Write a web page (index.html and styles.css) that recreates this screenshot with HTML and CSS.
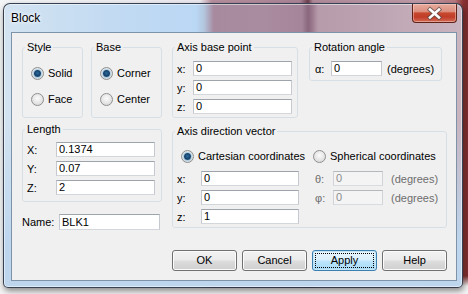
FILE: index.html
```html
<!DOCTYPE html>
<html>
<head>
<meta charset="utf-8">
<link rel="stylesheet" href="styles.css">
</head>
<body>
<div class="win">
  <div class="titlebar">
    <span class="title">Block</span>
    <div class="close">
      <svg width="43" height="17" viewBox="0 0 43 17">
        <path d="M17 4.5 L26 12.5 M26 4.5 L17 12.5" stroke="#5a4a48" stroke-width="4.4" stroke-linecap="square" fill="none" opacity="0.75"/>
        <path d="M17 4.5 L26 12.5 M26 4.5 L17 12.5" stroke="#ffffff" stroke-width="2.6" stroke-linecap="square" fill="none"/>
      </svg>
    </div>
  </div>
  <div class="client">
    <div class="col col-left">
      <div class="top-row">
        <fieldset class="grp grp-style">
          <legend>Style</legend>
          <div class="radios">
            <div class="radio"><span class="rb"><span class="dot"></span></span>Solid</div>
            <div class="radio"><span class="rb"></span>Face</div>
          </div>
        </fieldset>
        <fieldset class="grp grp-base">
          <legend>Base</legend>
          <div class="radios">
            <div class="radio"><span class="rb"><span class="dot"></span></span>Corner</div>
            <div class="radio"><span class="rb"></span>Center</div>
          </div>
        </fieldset>
      </div>
      <fieldset class="grp grp-length">
        <legend>Length</legend>
        <div class="fields">
          <div class="field"><span class="lbl">X:</span><span class="tb">0.1374</span></div>
          <div class="field"><span class="lbl">Y:</span><span class="tb">0.07</span></div>
          <div class="field"><span class="lbl">Z:</span><span class="tb">2</span></div>
        </div>
      </fieldset>
      <div class="name-row"><span class="lbl">Name:</span><span class="tb tb-name">BLK1</span></div>
    </div>
    <div class="col col-right">
      <div class="top-row top-row-right">
        <fieldset class="grp grp-abp">
          <legend>Axis base point</legend>
          <div class="fields">
            <div class="field"><span class="lbl">x:</span><span class="tb">0</span></div>
            <div class="field"><span class="lbl">y:</span><span class="tb">0</span></div>
            <div class="field"><span class="lbl">z:</span><span class="tb">0</span></div>
          </div>
        </fieldset>
        <fieldset class="grp grp-rot">
          <legend>Rotation angle</legend>
          <div class="fields">
            <div class="field"><span class="lbl">α:</span><span class="tb">0</span><span class="unit">(degrees)</span></div>
          </div>
        </fieldset>
      </div>
      <fieldset class="grp grp-adv">
        <legend>Axis direction vector</legend>
        <div class="adv-body">
          <div class="radio-row">
            <div class="radio radio-cart"><span class="rb"><span class="dot"></span></span>Cartesian coordinates</div>
            <div class="radio"><span class="rb"></span>Spherical coordinates</div>
          </div>
          <div class="adv-rows">
            <div class="field"><span class="lbl">x:</span><span class="tb">0</span><span class="lbl lbl-dis">θ:</span><span class="tb tb-dis">0</span><span class="unit unit-dis">(degrees)</span></div>
            <div class="field"><span class="lbl">y:</span><span class="tb">0</span><span class="lbl lbl-dis">φ:</span><span class="tb tb-dis">0</span><span class="unit unit-dis">(degrees)</span></div>
            <div class="field"><span class="lbl">z:</span><span class="tb">1</span></div>
          </div>
        </div>
      </fieldset>
      <div class="buttons">
        <div class="btn">OK</div>
        <div class="btn">Cancel</div>
        <div class="btn btn-default">Apply</div>
        <div class="btn">Help</div>
      </div>
    </div>
  </div>
</div>
</body>
</html>
```
FILE: styles.css
```css
html, body {
  margin: 0;
  padding: 0;
}
body {
  width: 468px;
  height: 294px;
  overflow: hidden;
  font-family: "Liberation Sans", Arial, sans-serif;
  font-size: 11px;
  color: #000;
  background:
    linear-gradient(to bottom, rgba(246,246,246,0) 0, rgba(246,246,246,0) 276px, #f4f4f4 286px),
    linear-gradient(to right, #f4f5f7 0, #eceaf0 200px, #b7909f 212px, #ab8598 300px, #6f4050 308px, #b28c9c 313px, #c09ca9 420px, #b87a80 455px, #8c3434 463px, #7e2c2c 468px);
}
.win {
  margin: 3px 0 0 3px;
  width: 460px;
  height: 285px;
  box-sizing: border-box;
  border: 1px solid rgba(30, 40, 55, 0.85);
  border-radius: 7px 7px 5px 5px;
  display: flex;
  flex-direction: column;
  overflow: hidden;
  background:
    linear-gradient(to bottom, rgba(189,214,238,0) 0, rgba(189,214,238,0) 40%, #bdd6ee 85%),
    linear-gradient(to right, #d3e3f1 0, #c3dbf2 100px, #bad7f4 192px, #b3c6de 200px, #a78a9e 210px, #aa8ca0 260px, #a48599 298px, #8a677c 304px, #9a788c 308px, #b69bab 314px, #bfa6b4 380px, #c9b4bf 458px);
  box-shadow: 1px 3px 6px rgba(0, 0, 0, 0.45), inset 0 0 0 1px rgba(255, 255, 255, 0.5);
}
.titlebar {
  flex: none;
  height: 28px;
  display: flex;
  align-items: flex-start;
  padding-left: 7px;
}
.title {
  margin-top: 7px;
  font-size: 12px;
  line-height: 14px;
  text-shadow: 0 0 5px #fff, 0 0 3px rgba(255,255,255,0.9);
}
.close {
  margin-left: auto;
  margin-right: 5px;
  width: 45px;
  height: 19px;
  box-sizing: border-box;
  border: 1px solid #5e2219;
  border-top: none;
  border-radius: 0 0 4px 4px;
  background: linear-gradient(to bottom, #e7ab9d 0, #dc8f7f 42%, #c8492f 50%, #c03c27 72%, #d56c57 100%);
  box-shadow: inset 0 0 0 1px rgba(255, 220, 210, 0.45);
  display: flex;
  align-items: center;
  justify-content: center;
}
.close svg {
  display: block;
}
.client {
  flex: none;
  height: 249px;
  margin: 0 5px 0 7px;
  box-sizing: border-box;
  border: 1px solid #7f93a8;
  background: #f0f0f0;
  display: flex;
  gap: 10px;
  padding: 7px 0 0 10px;
}
.col {
  display: flex;
  flex-direction: column;
}
.col-left {
  width: 140px;
}
.col-right {
  width: 275px;
}
.top-row {
  display: flex;
  gap: 8px;
  height: 78px;
}
.top-row-right {
  gap: 11px;
  align-items: flex-start;
}
.grp {
  margin: 0;
  padding: 0;
  min-width: 0;
  box-sizing: border-box;
  border: 1px solid #d5dfe5;
  border-radius: 3px;
}
.grp legend {
  margin-left: 2px;
  padding: 0 2px;
  line-height: 14px;
  height: 14px;
  white-space: nowrap;
}
.grp-style {
  width: 61px;
  height: 78px;
}
.grp-base {
  width: 71px;
  height: 78px;
}
.radios {
  padding: 11px 0 0 8px;
  display: flex;
  flex-direction: column;
  gap: 10px;
}
.radio {
  display: flex;
  align-items: center;
  height: 16px;
  gap: 4px;
  white-space: nowrap;
}
.rb {
  flex: none;
  width: 13px;
  height: 13px;
  box-sizing: border-box;
  border-radius: 50%;
  border: 1px solid #8e8f8f;
  background: radial-gradient(circle at 50% 40%, #fbfbfb 0, #e9e9e9 45%, #d2d2d2 100%);
  display: flex;
  align-items: center;
  justify-content: center;
}
.dot {
  width: 7px;
  height: 7px;
  border-radius: 50%;
  background: radial-gradient(circle at 50% 45%, #2a6ea3 0, #163f66 55%, #2e7cb8 100%);
  box-shadow: 0 0 1px 1px rgba(110, 180, 225, 0.55);
}
.grp-length {
  margin-top: 4px;
  height: 80px;
}
.fields {
  padding: 6px 0 0 4px;
  display: flex;
  flex-direction: column;
  gap: 4px;
}
.field {
  display: flex;
  align-items: center;
  height: 15px;
  white-space: nowrap;
}
.lbl {
  flex: none;
}
.grp-length .lbl {
  width: 29px;
}
.tb {
  flex: none;
  box-sizing: border-box;
  height: 15px;
  width: 99px;
  background: #fff;
  border: 1px solid;
  border-color: #9ea4ac #c6cad0 #d3d7dc #c6cad0;
  padding-left: 2px;
  line-height: 13px;
}
.name-row {
  margin-top: 12px;
  height: 16px;
  display: flex;
  align-items: center;
}
.name-row .lbl {
  width: 37px;
}
.tb-name {
  width: 101px;
  height: 16px;
  line-height: 14px;
}
.grp-abp {
  width: 126px;
  height: 78px;
}
.grp-abp .fields {
  padding: 7px 0 0 4px;
}
.grp-abp .lbl {
  width: 16px;
}
.grp-rot {
  width: 133px;
  height: 41px;
}
.grp-rot .fields {
  padding: 7px 0 0 5px;
}
.grp-rot .lbl {
  width: 16px;
}
.grp-rot .tb {
  width: 51px;
}
.unit {
  margin-left: 5px;
}
.grp-adv {
  margin-top: 6px;
  width: 275px;
  height: 104px;
}
.adv-body {
  padding: 10px 0 0 4px;
}
.radio-row {
  display: flex;
  height: 16px;
}
.radio-cart {
  margin-left: 4px;
  width: 132px;
}
.adv-rows {
  margin-top: 7px;
  display: flex;
  flex-direction: column;
  gap: 4px;
}
.adv-rows .lbl {
  width: 24px;
}
.adv-rows .tb {
  width: 98px;
}
.adv-rows .lbl-dis {
  margin-left: 16px;
  width: 18px;
  color: #6d6d6d;
}
.adv-rows .tb-dis {
  width: 50px;
  background: #f4f4f4;
  border-color: #b5b9be #d0d3d7 #d8dbdf #d0d3d7;
  color: #8d8d8d;
}
.unit-dis {
  margin-left: 8px;
  color: #6d6d6d;
}
.buttons {
  margin-top: 22px;
  display: flex;
  gap: 5px;
}
.btn {
  width: 65px;
  height: 21px;
  box-sizing: border-box;
  border: 1px solid #707070;
  border-radius: 3px;
  background: linear-gradient(to bottom, #f2f2f2 0, #ebebeb 48%, #dddddd 52%, #cfcfcf 100%);
  box-shadow: inset 0 0 0 1px #fbfbfb;
  display: flex;
  align-items: center;
  justify-content: center;
  line-height: 13px;
}
.btn-default {
  border-color: #3c7fb1;
  background: linear-gradient(to bottom, #eaf6fd 0, #d9f0fc 48%, #bee6fd 52%, #a7d9f5 100%);
  box-shadow: inset 0 0 0 1px #c4e5f6;
  outline: 1px dotted #000;
  outline-offset: -4px;
}
```
